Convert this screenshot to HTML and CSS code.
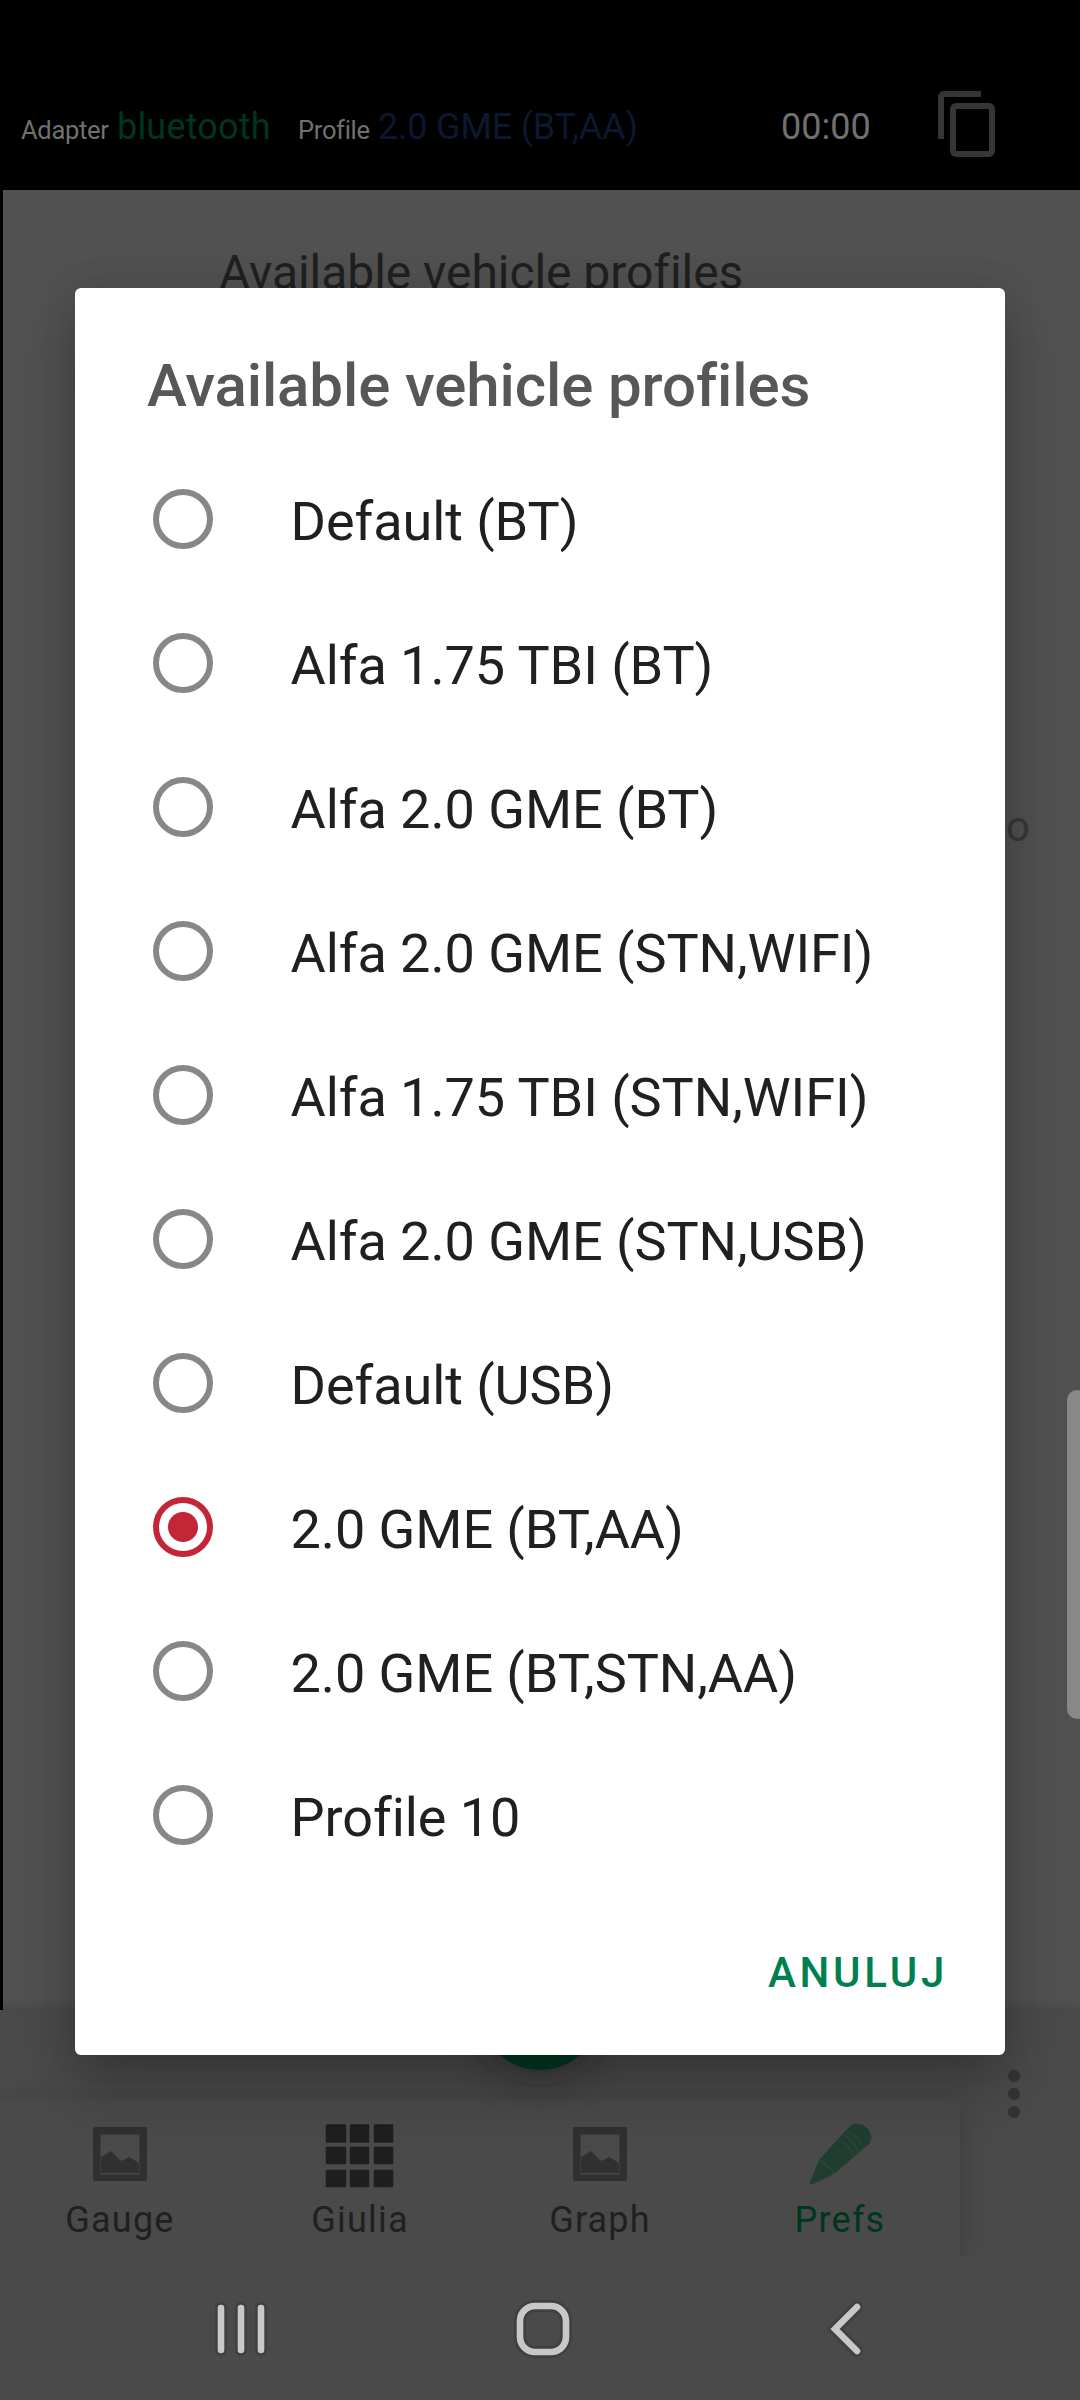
FILE: index.html
```html
<!DOCTYPE html>
<html lang="pl">
<head>
<meta charset="utf-8">
<title>Vehicle profiles</title>
<link rel="stylesheet" href="styles.css">
</head>
<body>
<div class="screen">
  <header class="status">
    <span class="label adapter-label">Adapter</span>
    <span class="value adapter">bluetooth</span>
    <span class="label profile-label">Profile</span>
    <span class="value profile">2.0 GME (BT,AA)</span>
    <span class="timer">00:00</span>
    <svg class="copy" viewBox="0 0 72 72"><path d="M9 57V15a6 6 0 0 1 6-6h37v6H15v42z"/><path fill-rule="evenodd" d="M27 21h33a6 6 0 0 1 6 6v42a6 6 0 0 1-6 6H27a6 6 0 0 1-6-6V27a6 6 0 0 1 6-6zm0 6v42h33V27z"/></svg>
  </header>
  <main class="prefs">
    <h2 class="pref-title">Available vehicle profiles</h2>
    <p class="pref-text">o</p>
  </main>
  <footer class="bottom">
    <div class="app-bar">
      <div class="cradle"><div class="fab"></div></div>
      <svg class="more" viewBox="0 0 12 48"><circle cx="6" cy="6" r="6"/><circle cx="6" cy="24" r="6"/><circle cx="6" cy="42" r="6"/></svg>
      <nav class="tabs">
        <a class="tab"><svg class="tab-icon" viewBox="0 0 72 72"><use href="#picture"/></svg>Gauge</a>
        <a class="tab"><svg class="tab-icon dark" viewBox="0 0 72 72"><path d="M3 5.500h18v16H3zM27 5.500h17v16H27zM51 5.500h17v16H51zM3 28h18v15H3zM27 28h17v15H27zM51 28h17v15H51zM3 51h18v15H3zM27 51h17v15H27zM51 51h17v15H51z"/></svg>Giulia</a>
        <a class="tab"><svg class="tab-icon" viewBox="0 0 72 72"><use href="#picture"/></svg>Graph</a>
        <a class="tab active"><svg class="tab-icon" viewBox="0 0 72 72"><path class="pencil" d="M6 62L15 40L43 9Q52 -1 62 7Q71 16 65 24L30 54L9 64Q5 65 6 62z"/><path class="seam" d="M14 41Q21 41 22 46Q28 48 30 54M34 20Q45 24 50 36M39 15Q50 19 54 32M43 11Q54 15 59 28"/></svg>Prefs</a>
      </nav>
    </div>
    <div class="system">
      <svg viewBox="0 0 1080 144"><g class="halo"><path d="M221 52v42M241 52v42M261 52v42"/><rect x="520" y="50" width="46" height="46" rx="15"/><path d="M857 51L835 73L857 95"/></g><g class="keys"><path d="M221 52v42M241 52v42M261 52v42"/><rect x="520" y="50" width="46" height="46" rx="15"/><path d="M857 51L835 73L857 95"/></g></svg>
    </div>
  </footer>
  <div class="edge"></div>
  <section class="dialog">
    <h1>Available vehicle profiles</h1>
    <ul>
      <li><i></i><span>Default (BT)</span></li>
      <li><i></i><span>Alfa 1.75 TBI (BT)</span></li>
      <li><i></i><span>Alfa 2.0 GME (BT)</span></li>
      <li><i></i><span>Alfa 2.0 GME (STN,WIFI)</span></li>
      <li><i></i><span>Alfa 1.75 TBI (STN,WIFI)</span></li>
      <li><i></i><span>Alfa 2.0 GME (STN,USB)</span></li>
      <li><i></i><span>Default (USB)</span></li>
      <li><i class="checked"></i><span>2.0 GME (BT,AA)</span></li>
      <li><i></i><span>2.0 GME (BT,STN,AA)</span></li>
      <li><i></i><span>Profile 10</span></li>
    </ul>
    <button>ANULUJ</button>
  </section>
</div>
<svg width="0" height="0" class="defs"><defs><g id="picture"><path fill-rule="evenodd" d="M11 7h50q2 0 2 2v50q0 2-2 2H11q-2 0-2-2V9q0-2 2-2zm5.500 7.500v40h39v-40z"/><path d="M17 37l10-6 10 10 8-4 10 6v10H17z"/></g></defs></svg>
</body>
</html>
```
FILE: styles.css
```css
* { box-sizing: border-box; margin: 0; padding: 0; }
body { width: 1080px; height: 2400px; overflow: hidden; background: #4a4a4a; font-family: Roboto, sans-serif; }
.defs { position: absolute; }
.screen { position: relative; width: 1080px; height: 2400px; overflow: hidden; display: flex; flex-direction: column; }
.status { height: 190px; background: #000; display: flex; align-items: baseline; padding: 103px 0 0 21px; color: #707070; white-space: nowrap; line-height: 48px; }
.label { font-size: 25.5px; letter-spacing: -0.3px; }
.value, .timer { font-size: 36px; }
.adapter-label { width: 96px; }
.adapter { width: 181px; color: #003520; letter-spacing: 0.2px; }
.profile-label { width: 80px; }
.profile { width: 403px; color: #0a1930; letter-spacing: -0.2px; }
.timer { width: 148px; }
.copy { width: 72px; height: 72px; fill: #363636; overflow: visible; align-self: flex-start; margin-top: -21px; }
.prefs { height: 1820px; border-left: 3px solid #000; background: #515151; }
.pref-title { padding: 53px 0 0 216px; font-size: 48px; line-height: 60px; font-weight: 400; letter-spacing: -0.05px; color: #202020; }
.pref-text { padding: 499px 50px 0 0; text-align: right; font-size: 42px; line-height: 50px; color: #383838; }
.bottom { height: 390px; background: #4a4a4a; box-shadow: 0 0 9px rgba(0,0,0,.25); }
.app-bar { position: relative; height: 246px; padding-top: 89px; overflow: hidden; }
.cradle { position: absolute; left: 465px; top: -75px; width: 150px; height: 150px; border-radius: 50%; padding: 15px; background: #474747; box-shadow: 0 0 2px rgba(0,0,0,.15), 0 12px 30px rgba(0,0,0,.1); }
.fab { height: 120px; border-radius: 50%; background: #003821; box-shadow: 0 6px 16px rgba(0,0,0,.2); }
.more { position: absolute; left: 1008px; top: 60px; width: 12px; height: 48px; fill: #333; }
.tabs { position: relative; width: 960px; height: 157px; display: flex; box-shadow: 0 6px 24px rgba(0,0,0,.19); }
.tab { width: 240px; display: flex; flex-direction: column; align-items: center; padding-top: 21px; font-size: 36px; line-height: 42px; letter-spacing: 1.2px; color: #202020; }
.tab-icon { width: 72px; height: 72px; margin-bottom: 7px; fill: #303030; }
.tab-icon.dark { fill: #1f1f1f; stroke: #1f1f1f; stroke-width: 2.5; stroke-linejoin: round; }
.active { color: #003520; }
.pencil { fill: #203d30; }
.seam { fill: none; stroke: #2d4439; stroke-width: 1.5; }
.system { height: 144px; }
.system svg { display: block; width: 1080px; height: 144px; fill: none; stroke-linecap: round; }
.halo { stroke: #404040; stroke-width: 12; }
.keys { stroke: #c8c8c8; stroke-width: 6.6; }
.edge { position: absolute; left: 1067px; top: 1390px; width: 20px; height: 329px; border-radius: 12px; background: #888; }
.dialog { position: absolute; left: 75px; top: 288px; width: 930px; height: 1767px; border-radius: 6px; background: #fff; box-shadow: 0 30px 60px rgba(0,0,0,.25), 0 0 36px rgba(0,0,0,.08); display: flex; flex-direction: column; }
h1 { padding: 63px 0 0 72px; height: 159px; font-size: 60px; line-height: 70px; font-weight: 500; letter-spacing: -0.1px; color: #575757; white-space: nowrap; }
ul { list-style: none; height: 1440px; }
li { height: 144px; padding-left: 78px; display: flex; align-items: center; font-size: 54px; letter-spacing: -0.06px; color: #202020; white-space: nowrap; }
li span { padding-top: 4px; }
i { width: 60px; height: 60px; border: 6px solid #878787; border-radius: 50%; margin-right: 77.5px; }
i.checked { border-color: #c32637; background: radial-gradient(circle, #c32637 14.500px, transparent 15.500px); }
button { align-self: flex-end; margin: 56px 57px 0 0; border: 0; background: none; font: 500 42px/60px Roboto, sans-serif; letter-spacing: 3.7px; color: #008050; }
```
